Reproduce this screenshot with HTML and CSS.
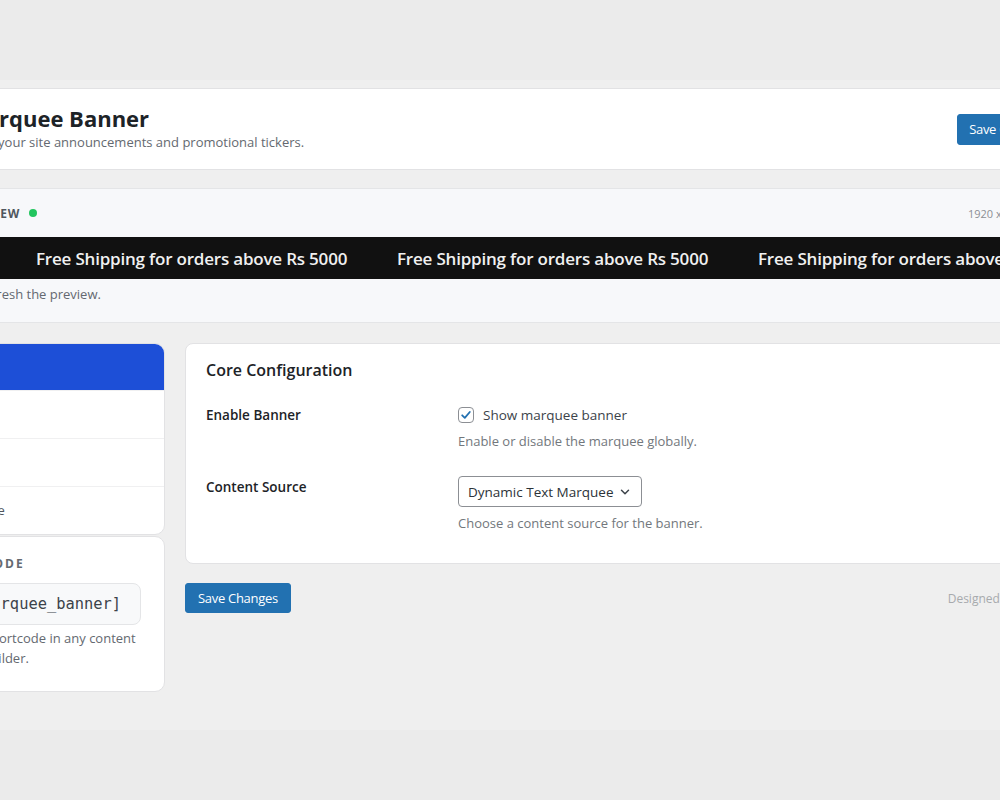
FILE: index.html
```html
<!DOCTYPE html>
<html lang="en">
<head>
    <meta charset="UTF-8">
    <meta name="viewport" content="width=device-width, initial-scale=1.0">
    <title>Marquee Banner</title>
    <link rel="stylesheet" href="styles.css">
</head>
<body>

    <div id="page">
        <div id="wrap">

            <!-- top title bar -->
            <div class="head">
                <div>
                    <h1>Marquee Banner</h1>
                    <p>Craft your site announcements and promotional tickers.</p>
                </div>
                <button class="btn">Save Changes</button>
            </div>

            <!-- live preview of the ticker -->
            <div class="preview">
                <div class="preview-top">
                    <span class="preview-label">Live Preview <i class="dot"></i></span>
                    <span class="preview-size">1920 x 80 &middot; desktop</span>
                </div>
                <div class="ticker">
                    <div class="ticker-track">
                        <span>Free Shipping for orders above Rs 5000</span>
                        <span>Free Shipping for orders above Rs 5000</span>
                        <span>Free Shipping for orders above Rs 5000</span>
                        <span>Free Shipping for orders above Rs 5000</span>
                    </div>
                </div>
                <p class="preview-note">Save to refresh the preview.</p>
            </div>

            <div class="layout">
                <div class="side">
                    <ul class="tabs">
                        <li class="on">General</li>
                        <li>Content</li>
                        <li>Behavior</li>
                        <li>Appearance</li>
                    </ul>
                    <div class="box">
                        <h3>Shortcode</h3>
                        <div class="code">[sm_marquee_banner]</div>
                        <p>Use this shortcode in any content or page builder.</p>
                    </div>
                </div>

                <div class="main">
                    <div class="panel">
                        <h2>Core Configuration</h2>

                        <div class="row">
                            <div class="label">Enable Banner</div>
                            <div class="field">
                                <label class="check">
                                    <span class="checkbox">
                                        <svg width="12" height="12" viewBox="0 0 12 12"><path d="M2.2 6.3 L4.8 8.8 L9.8 3" fill="none" stroke="#2271b1" stroke-width="1.8" stroke-linecap="round" stroke-linejoin="round"/></svg>
                                    </span>
                                    Show marquee banner
                                </label>
                                <p class="help">Enable or disable the marquee globally.</p>
                            </div>
                        </div>

                        <div class="row">
                            <div class="label">Content Source</div>
                            <div class="field">
                                <div class="select">
                                    Dynamic Text Marquee
                                    <svg width="12" height="12" viewBox="0 0 12 12"><path d="M2.5 4.3 L6 7.8 L9.5 4.3" fill="none" stroke="#3c434a" stroke-width="1.5" stroke-linecap="round" stroke-linejoin="round"/></svg>
                                </div>
                                <p class="help">Choose a content source for the banner.</p>
                            </div>
                        </div>
                    </div>

                    <div class="foot">
                        <button class="btn">Save Changes</button>
                        <span class="credit">Designed by PixelLab</span>
                    </div>
                </div>
            </div>

        </div>
    </div>

</body>
</html>
```

FILE: styles.css
```css
html{
    overflow: hidden;
    background-color: #ebebeb;
}
body{
    margin: 0;
    font-family: "Open Sans", "Noto Sans", sans-serif;
    color: #1d2327;
}
#page{
    margin-top: 80px;
    height: 650px;
    background-color: #efefef;
    padding-top: 8px;
    box-sizing: border-box;
}
#wrap{
    width: 1171px;
    margin-left: -85px;
}

.btn{
    background-color: #2271b1;
    color: #fff;
    border: 1px solid #2271b1;
    border-radius: 3px;
    font-family: inherit;
    font-size: 13px;
    height: 31px;
    padding: 0 11px;
    letter-spacing: -0.3px;
}

/* title bar */
.head{
    height: 82px;
    box-sizing: border-box;
    background-color: #fff;
    border: 1px solid #e2e2e4;
    display: flex;
    align-items: center;
    justify-content: space-between;
    padding: 0 24px 0 49px;
}
.head > div{
    margin-top: -4px;
}
.head h1{
    margin: 0;
    font-size: 22px;
    font-weight: 700;
    line-height: 28px;
    color: #1d2327;
}
.head p{
    margin: 1px 0 0;
    font-size: 13px;
    color: #646970;
}

/* preview */
.preview{
    margin-top: 18px;
    background-color: #f7f8fa;
    border: 1px solid #e4e5e7;
    height: 135px;
    box-sizing: border-box;
}
.preview-top{
    height: 48px;
    display: flex;
    align-items: center;
    justify-content: space-between;
    padding: 0 18px 0 16px;
}
.preview-label{
    font-size: 12px;
    font-weight: 700;
    letter-spacing: 0.6px;
    text-transform: uppercase;
    color: #50575e;
    display: flex;
    align-items: center;
    gap: 9px;
}
.dot{
    width: 8px;
    height: 8px;
    border-radius: 50%;
    background-color: #22c55e;
}
.preview-size{
    font-size: 11px;
    color: #8c8f94;
}
.ticker{
    height: 42px;
    background-color: #111;
    overflow: hidden;
    display: flex;
    align-items: center;
}
.ticker-track{
    display: flex;
    white-space: nowrap;
    transform: translateX(-241px);
}
.ticker-track span{
    flex: none;
    width: 361px;
    color: #f0f0f0;
    font-size: 17px;
    font-weight: 600;
    letter-spacing: -0.2px;
}
.preview-note{
    margin: 0;
    padding: 6px 16px 0;
    font-size: 13px;
    color: #646970;
}

/* sidebar + settings */
.layout{
    margin-top: 20px;
    display: grid;
    grid-template-columns: 250px 1fr;
    gap: 20px;
    align-items: start;
}
.tabs{
    list-style: none;
    margin: 0;
    padding: 0;
    background-color: #fff;
    border: 1px solid #e2e2e4;
    border-radius: 10px;
    overflow: hidden;
}
.tabs li{
    height: 48px;
    box-sizing: border-box;
    line-height: 47px;
    padding: 0 16px;
    font-size: 13px;
    color: #50575e;
    border-top: 1px solid #f0f0f1;
}
.tabs li.on{
    height: 46px;
    line-height: 46px;
    border-top: 0;
    background-color: #1d4fd7;
    color: #fff;
    font-weight: 600;
}
.box{
    margin-top: 1px;
    background-color: #fff;
    border: 1px solid #e2e2e4;
    border-radius: 10px;
    padding: 18px 23px 23px 17px;
}
.box h3{
    margin: 0;
    font-size: 12px;
    line-height: 17px;
    font-weight: 700;
    letter-spacing: 2.1px;
    text-transform: uppercase;
    color: #646970;
}
.code{
    margin-top: 11px;
    height: 42px;
    box-sizing: border-box;
    line-height: 40px;
    padding: 0 11px;
    background-color: #f8f9fa;
    border: 1px solid #e4e5e7;
    border-radius: 8px;
    font-family: "DejaVu Sans Mono", monospace;
    font-size: 15.4px;
    color: #3c434a;
    white-space: nowrap;
    overflow: hidden;
}
.box p{
    margin: 3px 0 0;
    font-size: 13px;
    line-height: 20px;
    color: #646970;
}

.panel{
    background-color: #fff;
    border: 1px solid #e2e2e4;
    border-radius: 8px;
    padding: 14px 20px 30px;
}
.panel h2{
    margin: 0 0 22px;
    font-size: 16px;
    font-weight: 600;
    line-height: 24px;
    color: #1d2327;
}
.row{
    display: grid;
    grid-template-columns: 252px 1fr;
}
.row + .row{
    margin-top: 25px;
}
.label{
    font-size: 13.5px;
    font-weight: 600;
    line-height: 20px;
    padding-top: 1px;
}
.field{
    font-size: 13.5px;
}
.check{
    display: flex;
    align-items: center;
    gap: 9px;
    line-height: 20px;
    padding-top: 1px;
    color: #3c434a;
}
.checkbox{
    width: 16px;
    height: 16px;
    box-sizing: border-box;
    border: 1px solid #8c8f94;
    border-radius: 4px;
    display: flex;
    align-items: center;
    justify-content: center;
}
.help{
    margin: 6px 0 0;
    font-size: 13px;
    line-height: 20px;
    color: #72777c;
}
.select{
    display: inline-flex;
    align-items: center;
    gap: 6px;
    height: 31px;
    box-sizing: border-box;
    padding: 0 10px 0 9px;
    border: 1px solid #8c8f94;
    border-radius: 4px;
    font-size: 13.5px;
    color: #2c3338;
}
.select + .help{
    margin-top: 6px;
}

.foot{
    margin-top: 19px;
    display: flex;
    align-items: center;
    justify-content: space-between;
    padding-right: 20px;
}
.foot .btn{
    height: 30px;
    padding: 0 12px;
}
.credit{
    font-size: 12px;
    color: #a7aaad;
}
```
